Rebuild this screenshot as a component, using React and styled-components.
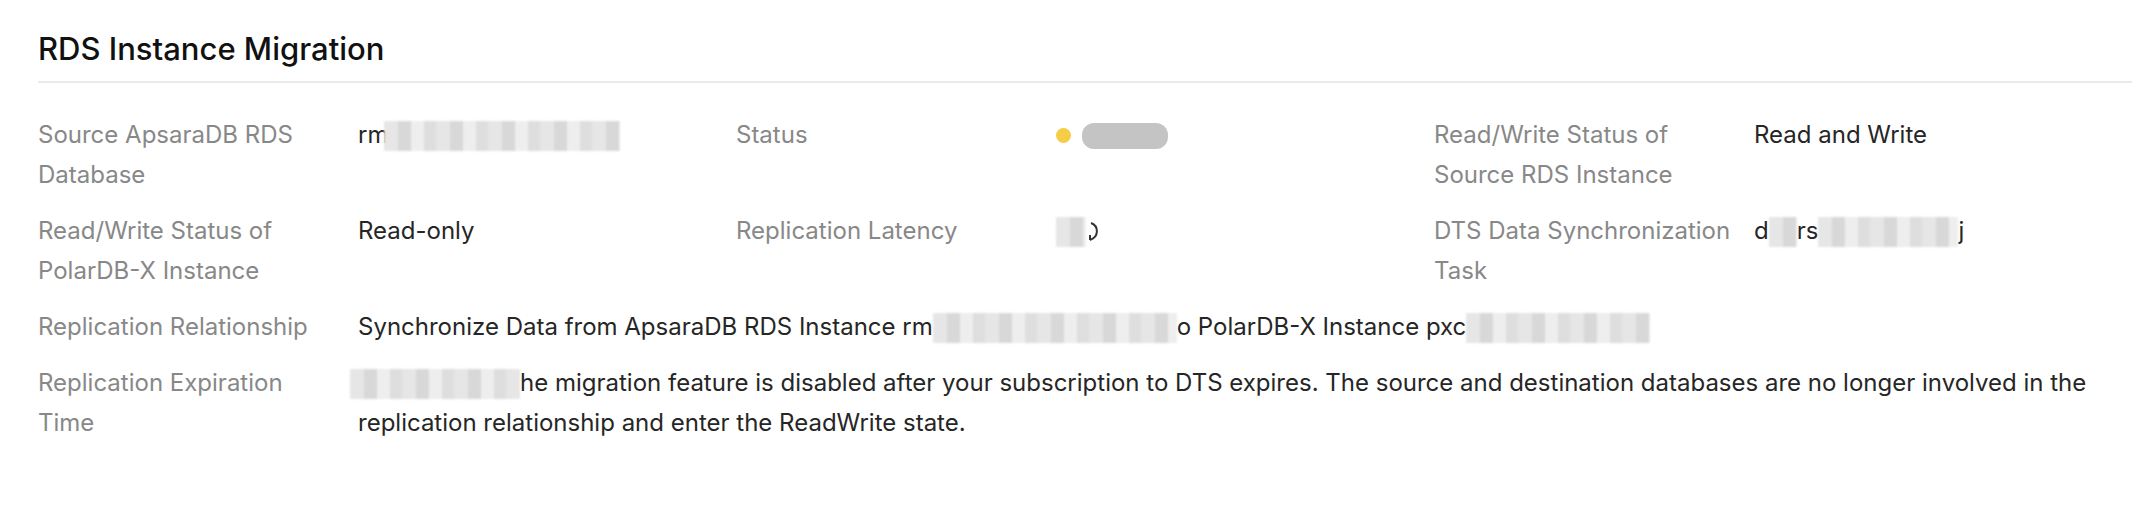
import React from 'react'
import styled, { createGlobalStyle } from 'styled-components'

const GlobalStyle = createGlobalStyle`
  body {
    margin: 0;
    background: #fff;
    font-family: Inter, "Noto Sans", sans-serif;
  }
`

const fields = [
  { label: 'Source ApsaraDB RDS Database', value: 'source' },
  { label: 'Status', value: 'status' },
  { label: 'Read/Write Status of Source RDS Instance', value: 'Read and Write' },
  { label: 'Read/Write Status of PolarDB-X Instance', value: 'Read-only' },
  { label: 'Replication Latency', value: 'latency' },
  { label: 'DTS Data Synchronization Task', value: 'task' },
  { label: 'Replication Relationship', value: 'relation', full: true },
  { label: 'Replication Expiration Time', value: 'expire', full: true },
]

function renderValue(value) {
  switch (value) {
    case 'source':
      return <>rm<Redacted $w={236} $shift={-4} /></>
    case 'status':
      return <Status><Dot /><Smudge /></Status>
    case 'latency':
      return (
        <>
          <Redacted $w={30} />
          <Arc width="16" height="26" viewBox="0 0 16 26">
            <path d="M5 4 C13 7 13 18 4 21 M4 21 L4 16" fill="none" stroke="#333" strokeWidth="2" />
          </Arc>
        </>
      )
    case 'task':
      return <>d<Redacted $w={28} />rs<Redacted $w={140} />j</>
    case 'relation':
      return <>Synchronize Data from ApsaraDB RDS Instance rm<Redacted $w={244} />o PolarDB-X Instance pxc<Redacted $w={184} /></>
    case 'expire':
      return <><Redacted $w={170} $shift={-8} />he migration feature is disabled after your subscription to DTS expires. The source and destination databases are no longer involved in the replication relationship and enter the ReadWrite state.</>
    default:
      return value
  }
}

function App() {
  return (
    <Panel>
      <GlobalStyle />
      <Title>RDS Instance Migration</Title>
      <Grid>
        {fields.map((f) => (
          <Field key={f.label} $full={f.full}>
            <Label>{f.label}</Label>
            <Value>{renderValue(f.value)}</Value>
          </Field>
        ))}
      </Grid>
    </Panel>
  )
}

export default App

const Panel = styled.section`
  padding: 29px 12px 40px 38px;
`

const Title = styled.h2`
  margin: 0;
  padding-bottom: 12px;
  border-bottom: 2px solid #ebebeb;
  font-size: 31px;
  line-height: 40px;
  font-weight: 500;
  color: #111;
`

const Grid = styled.div`
  display: grid;
  grid-template-columns: repeat(3, 1fr);
  row-gap: 16px;
  padding-top: 32px;
`

const Field = styled.div`
  display: flex;
  grid-column: ${(p) => (p.$full ? '1 / -1' : 'auto')};
  font-size: 24px;
  line-height: 40px;
`

const Label = styled.div`
  flex: 0 0 320px;
  box-sizing: border-box;
  padding-right: 20px;
  color: #888;
`

const Value = styled.div`
  flex: 1;
  min-width: 0;
  color: #262626;
`

const Redacted = styled.span`
  display: inline-block;
  width: ${(p) => p.$w}px;
  height: 30px;
  vertical-align: middle;
  margin-left: ${(p) => p.$shift || 0}px;
  background: repeating-linear-gradient(
    90deg,
    #e6e6e6 0 14px,
    #d8d8d8 14px 27px,
    #eeeeee 27px 40px,
    #dedede 40px 52px
  );
  filter: blur(0.8px);
`

const Status = styled.span`
  display: inline-flex;
  align-items: center;
  height: 40px;
`

const Dot = styled.span`
  width: 15px;
  height: 15px;
  border-radius: 50%;
  background: #f5cd47;
  margin-right: 11px;
`

const Smudge = styled.span`
  width: 86px;
  height: 26px;
  border-radius: 12px;
  background: #c4c4c4;
`

const Arc = styled.svg`
  vertical-align: middle;
`
